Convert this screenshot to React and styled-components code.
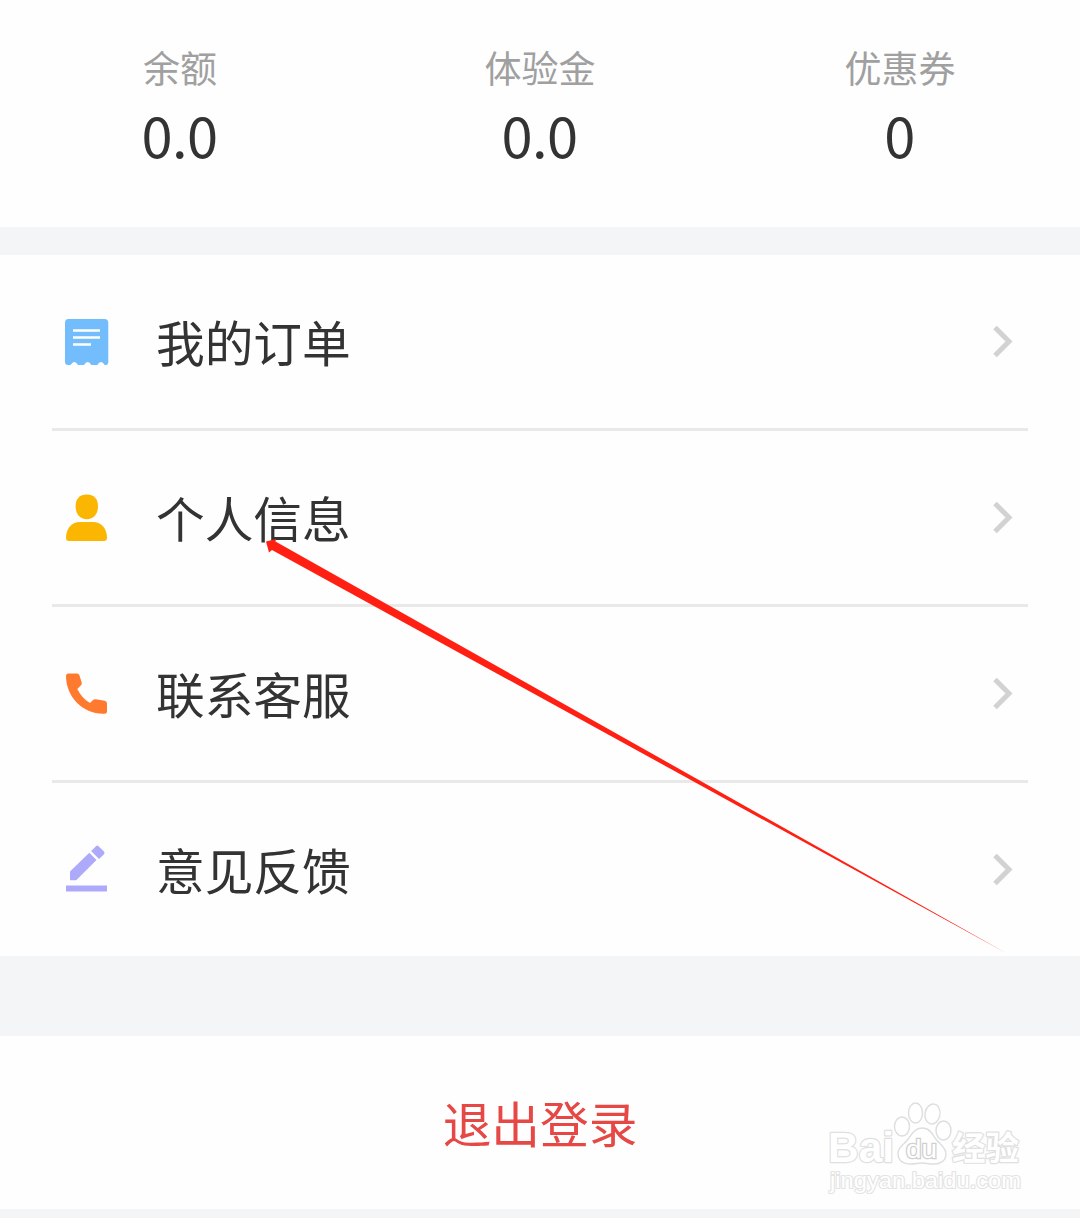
import React from "react";
import styled, { createGlobalStyle } from "styled-components";

const GlobalStyle = createGlobalStyle`
  * {
    box-sizing: border-box;
  }
  body {
    margin: 0;
    background-color: #f4f5f7;
    font-family: "Noto Sans CJK SC", sans-serif;
    color: #333333;
  }
`;

const Page = styled.div`
  position: relative;
  width: 1080px;
  height: 1218px;
  overflow: hidden;
  display: flex;
  flex-direction: column;
  background-color: #f4f5f7;
`;

const Stats = styled.section`
  height: 227px;
  padding-top: 40px;
  display: grid;
  grid-template-columns: repeat(3, 1fr);
  background-color: #fefefe;
`;

const Stat = styled.div`
  display: flex;
  flex-direction: column;
  align-items: center;
`;

const StatLabel = styled.span`
  font-size: 37px;
  line-height: 54px;
  color: #a0a0a0;
`;

const StatValue = styled.span`
  padding-right: 1px;
  font-size: 56px;
  line-height: 79px;
  letter-spacing: -0.5px;
  color: #333333;
`;

const Menu = styled.nav`
  margin-top: 28px;
  height: 701px;
  padding: 0 52px;
  background-color: #fefefe;
`;

const MenuItem = styled.div`
  height: 176px;
  padding: 0 14px 0 11px;
  display: flex;
  align-items: center;
  border-bottom: 3px solid #e9e9ea;
  &:last-child {
    height: 173px;
    border-bottom: none;
  }
`;

const MenuText = styled.span`
  flex: 1;
  margin-left: 45px;
  padding-bottom: 2px;
  font-size: 48.7px;
  line-height: 72px;
`;

const Icon = styled.svg`
  width: 48px;
  height: 52px;
  display: block;
`;

const Chevron = styled.svg`
  width: 24px;
  height: 36px;
  display: block;
`;

const Logout = styled.button`
  margin-top: 80px;
  height: 173px;
  padding: 0 0 2px;
  border: none;
  background-color: #fefefe;
  font-family: inherit;
  font-size: 48.7px;
  line-height: 72px;
  color: #e64845;
  cursor: pointer;
`;

const Arrow = styled.svg`
  position: absolute;
  left: 260px;
  top: 530px;
  width: 760px;
  height: 430px;
  pointer-events: none;
`;

const Watermark = styled.svg`
  position: absolute;
  left: 820px;
  top: 1095px;
  width: 210px;
  height: 105px;
  pointer-events: none;
  font-family: "Liberation Sans", "Noto Sans CJK SC", sans-serif;
`;

const OrderIcon = () => (
  <Icon viewBox="0 0 48 52">
    <path
      fill="#73bdfd"
      d="M5.500 3h36a3.800 3.800 0 0 1 3.800 3.800V46q0 3-2.800 3h-.8q-3.700-6-7.400 0h-5.900q-3.700-6-7.400 0h-6q-3.700-6-7.400 0H5q-3 0-3-3V6.800A3.800 3.800 0 0 1 5.500 3z"
    />
    <path
      fill="none"
      stroke="#fff"
      strokeWidth="2.600"
      d="M10 14.500h27M10 21.500h27M10 28.500h18"
    />
  </Icon>
);

const UserIcon = () => (
  <Icon viewBox="0 0 48 52">
    <path
      fill="#fbb602"
      d="M23.800 2.500C31 2.500 35 7 35 14.200s-3.800 13-11.200 13-11.200-5.800-11.200-13S16.600 2.500 23.800 2.500z"
    />
    <path
      fill="#fbb602"
      d="M17 30h13c9 0 14 7 14 16q0 3-3 3H6q-3 0-3-3c0-9 5-16 14-16z"
    />
  </Icon>
);

const PhoneIcon = () => (
  <Icon viewBox="0 0 48 52">
    <path
      fill="#ff7a2e"
      d="M5 5.500h9q2 0 2.500 2l2.200 7q.4 1.500-.7 2.700L14.300 21c3 6 7 10.500 12.700 14l3-3q1.300-1.100 2.800-.8l9 1.500q2.200.4 2.200 2.800v8q0 2.200-2.300 2.200C20 46.500 3 29 3 8Q3 5.500 5 5.500z"
    />
  </Icon>
);

const EditIcon = () => (
  <Icon viewBox="0 0 48 52">
    <path
      fill="#aeaafb"
      d="M26.300 8.800L33.500 16L13.200 36.300H7V27.500zM28.100 7.100L33 2.200Q34.300 1 35.600 2.200L41 7.600Q42.200 9 41 10.200L36 14.900z"
    />
    <path fill="#aeaafb" d="M3 41.500h41v6H3z" />
  </Icon>
);

const stats = [
  { label: "余额", value: "0.0" },
  { label: "体验金", value: "0.0" },
  { label: "优惠券", value: "0" },
];

const items = [
  { text: "我的订单", icon: <OrderIcon /> },
  { text: "个人信息", icon: <UserIcon /> },
  { text: "联系客服", icon: <PhoneIcon /> },
  { text: "意见反馈", icon: <EditIcon /> },
];

export default function App() {
  return (
    <Page>
      <GlobalStyle />
      <Stats>
        {stats.map((stat) => (
          <Stat key={stat.label}>
            <StatLabel>{stat.label}</StatLabel>
            <StatValue>{stat.value}</StatValue>
          </Stat>
        ))}
      </Stats>

      <Menu>
        {items.map((item) => (
          <MenuItem key={item.text}>
            {item.icon}
            <MenuText>{item.text}</MenuText>
            <Chevron viewBox="0 0 24 36">
              <path
                fill="none"
                stroke="#d2d2d2"
                strokeWidth="5"
                d="M5 3.500l14 14-14 14"
              />
            </Chevron>
          </MenuItem>
        ))}
      </Menu>

      <Logout>退出登录</Logout>

      <Arrow viewBox="260 530 760 430">
        <path
          fill="#ff2013"
          d="M266 541.500L276 539L275.500 541.500L1006 953L272 550L269 552.500z"
        />
      </Arrow>

      <Watermark viewBox="820 1095 210 105">
        <g fill="#fff" stroke="#e0e0e0" strokeLinejoin="round" paintOrder="stroke">
          <text x="828" y="1162" fontSize="43" fontWeight="700" strokeWidth="2.400" textLength="66" lengthAdjust="spacingAndGlyphs">
            Bai
          </text>
          <text x="952" y="1160" fontSize="33" fontWeight="700" strokeWidth="2.400" textLength="67" lengthAdjust="spacingAndGlyphs">
            经验
          </text>
          <text x="830" y="1188" fontSize="21.500" strokeWidth="2.200" stroke="#e4e4e4" textLength="191" lengthAdjust="spacingAndGlyphs">
            jingyan.baidu.com
          </text>
        </g>
        <g fill="#fff" stroke="#dedede" strokeWidth="1.400">
          <ellipse cx="902" cy="1126.500" rx="7.500" ry="9.500" />
          <ellipse cx="915.500" cy="1113" rx="7" ry="10" />
          <ellipse cx="932.500" cy="1114" rx="7.500" ry="10" transform="rotate(10 932.500 1114)" />
          <ellipse cx="943.500" cy="1130.500" rx="7.500" ry="9.500" />
          <path d="M922 1128c7 0 10 5 13 10 4 6 11 9 11 16 0 7-6 10-12 10-5 0-8-1-12-1s-7 1-11 1c-7 0-13-3-13-11 0-6 7-9 11-15 4-6 7-10 13-10z" />
        </g>
        <text x="906" y="1158" fontSize="25" fill="#fff" stroke="#d0d0d0" strokeWidth="2.400" paintOrder="stroke" textLength="31" lengthAdjust="spacingAndGlyphs">
          du
        </text>
      </Watermark>
    </Page>
  );
}
